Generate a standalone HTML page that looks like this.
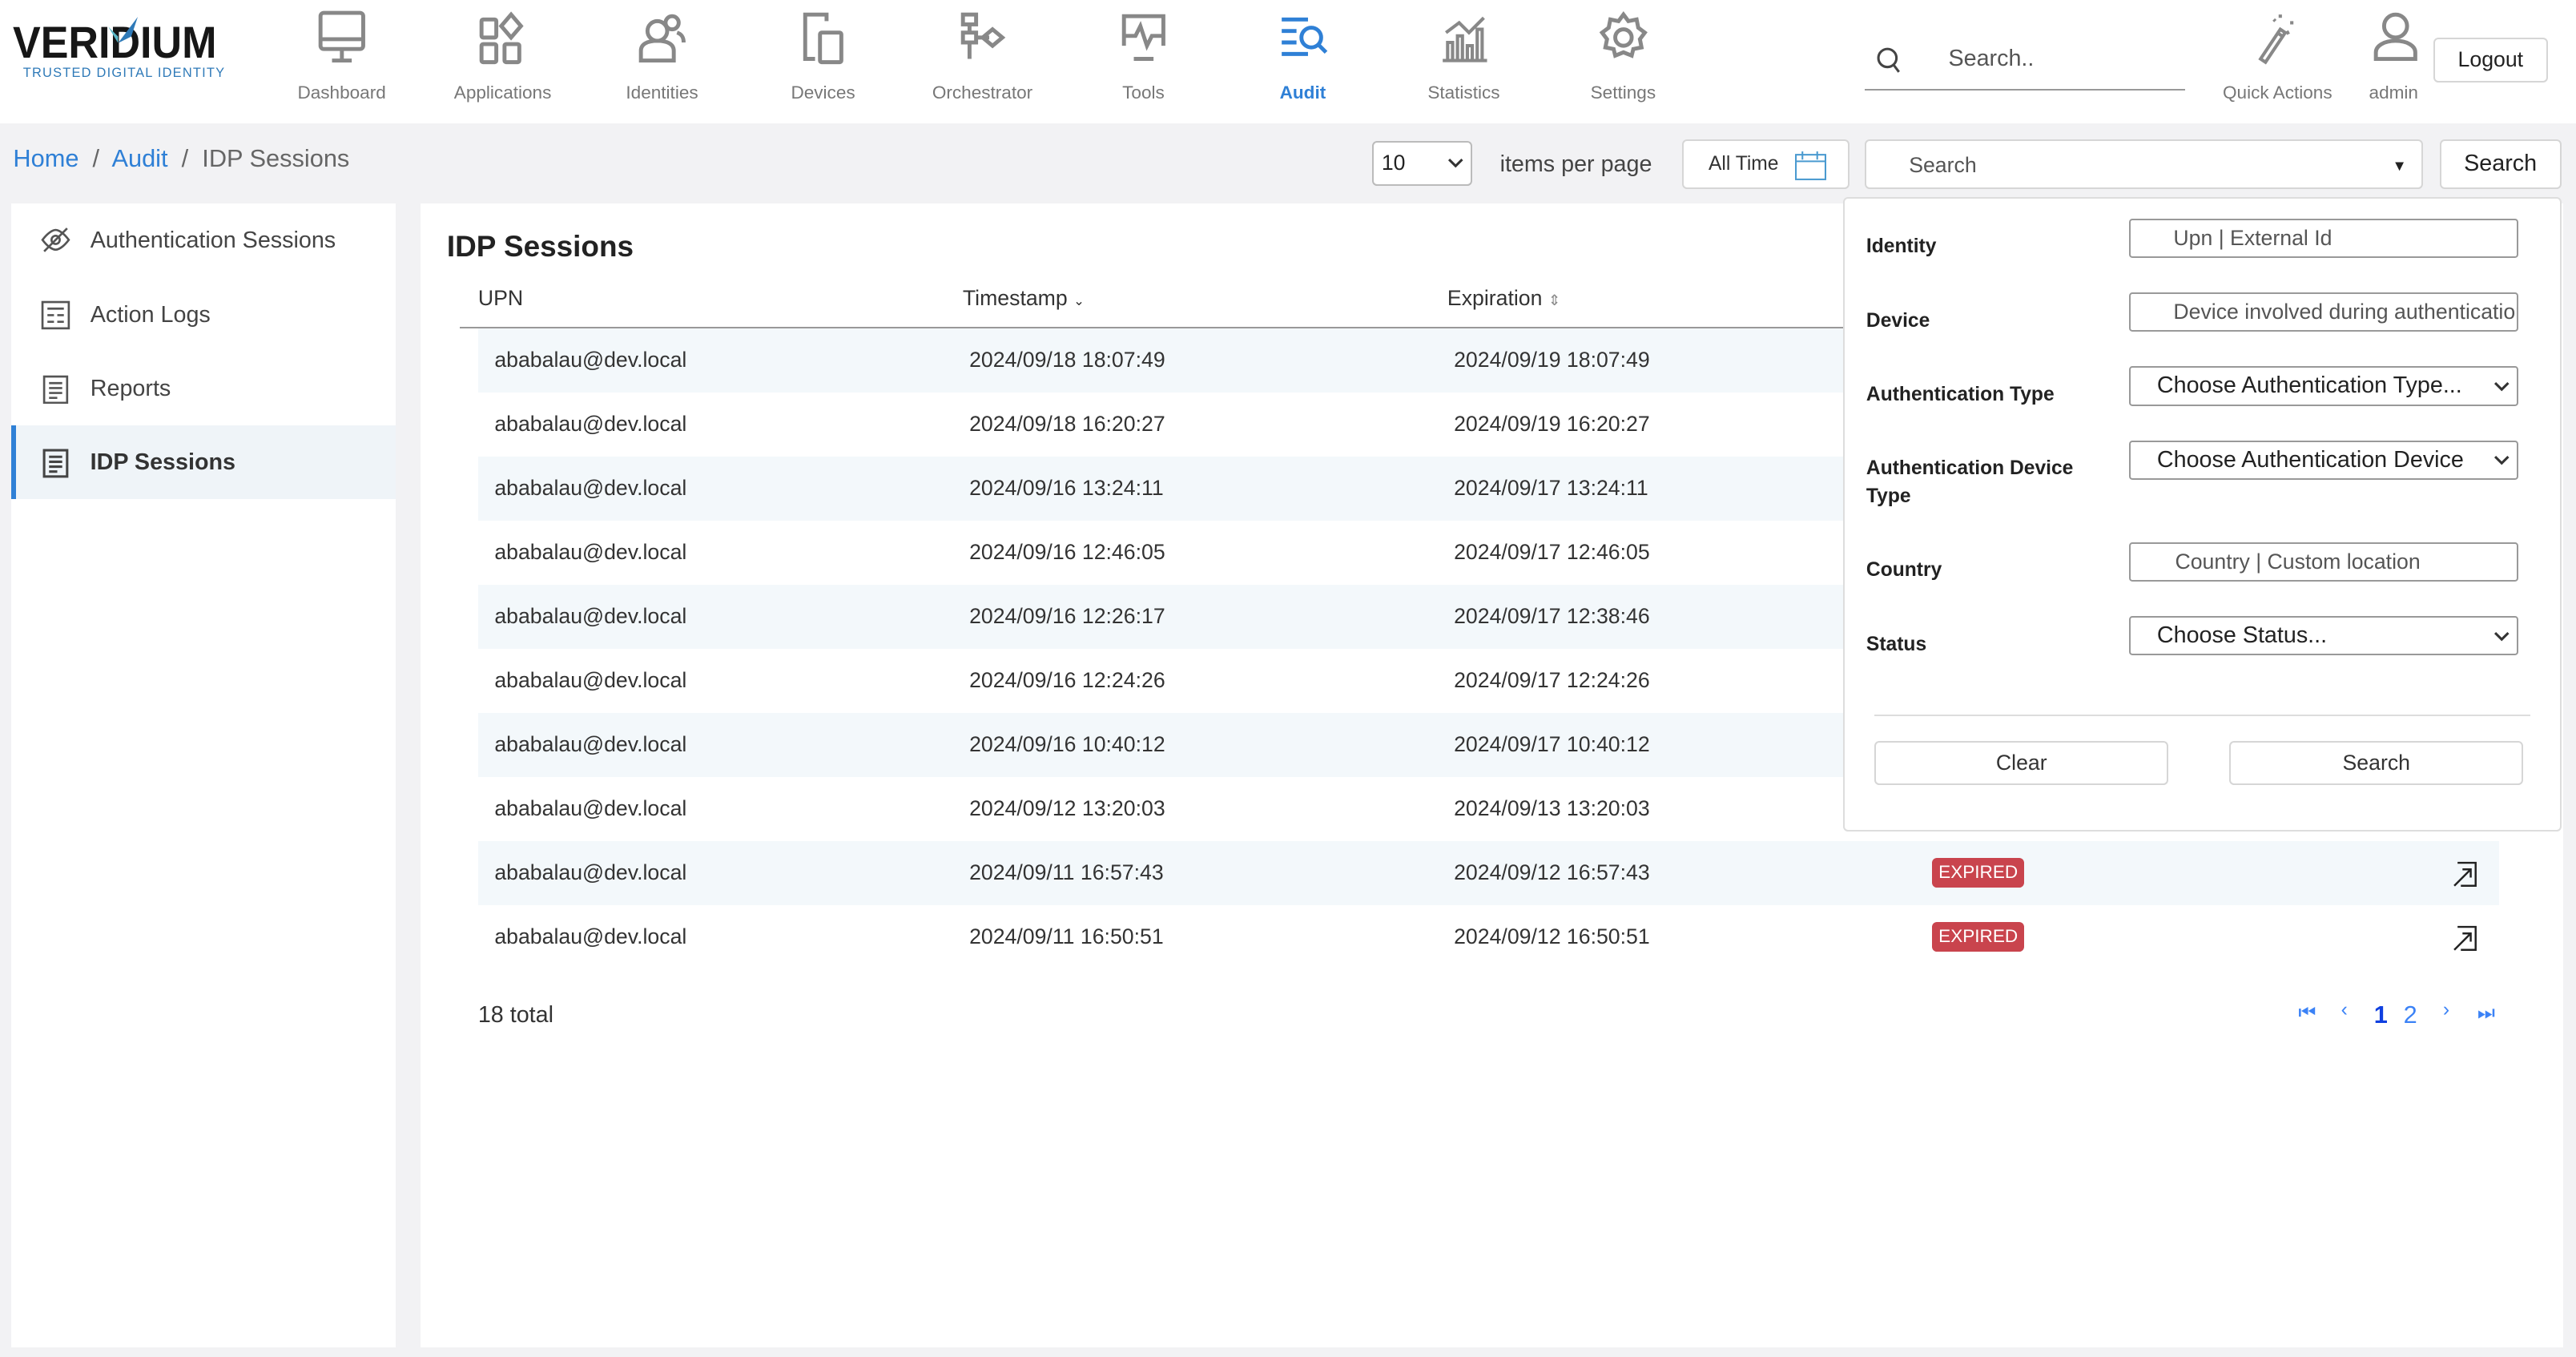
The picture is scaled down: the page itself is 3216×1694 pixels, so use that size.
<!DOCTYPE html>
<html><head><meta charset="utf-8"><style>
*{box-sizing:border-box;margin:0;padding:0}
html,body{width:3216px;height:1694px;overflow:hidden;background:#f2f2f4}
#r{zoom:2.051;width:1568px;height:826px;position:relative;font-family:"Liberation Sans",sans-serif;color:#333}
.a{position:absolute}
.hdr{left:0;top:0;width:1568px;height:75px;background:#fff}
.nav{width:90px;text-align:center;top:6px;color:#777;font-size:11px}
.nav svg{display:block;margin:0 auto 10px;width:32px;height:34px}
.nav.on{color:#2f80d6;font-weight:bold}
.box{background:#fff;border:1px solid #d6d6d6;border-radius:3px}
.side div{height:45px;line-height:45px;padding-left:48px;font-size:14px;color:#444;position:relative}
.side svg{position:absolute;left:18px;top:14px}
.row{left:291px;width:1230px;height:39px;font-size:13px;color:#333;line-height:39px}
.row span{position:absolute}
.lab{left:1136px;font-size:12px;font-weight:bold;color:#222;width:150px;line-height:17px}
.inp{left:1296px;width:237px;height:24px;border:1px solid #999;border-radius:2px;font-size:13px;color:#555;line-height:22px;background:#fff}
.badge{background:#c9444d;color:#fff;font-size:11px;border-radius:3px;padding:0 4px;height:18px;line-height:18px;top:10px}
</style></head><body><div id="r">
<div class="a hdr"></div>
<div class="a" style="left:8px;top:12px">
<div style="font-size:27px;font-weight:bold;color:#161616;line-height:28px;transform:scaleX(0.94);transform-origin:left">VERIDIUM</div>
<div style="font-size:8px;color:#2f7ab8;letter-spacing:0.6px;margin-left:6px">TRUSTED DIGITAL IDENTITY</div>
<svg class="a" style="left:56px;top:-2px" width="22" height="16"><path d="M2 6 L8 12 L8 16 Z" fill="#5bb8c8"/><path d="M8 16 L20 0 L16 12 Z" fill="#2f7ab8"/></svg>
</div>
<div class="a nav" style="left:163px"><svg viewBox="0 0 32 34" fill="none" stroke="#888" stroke-width="2.4"><rect x="3" y="2" width="26" height="22" rx="2"/><path d="M3 18h26M16 24v6M10 31h12"/></svg>Dashboard</div>
<div class="a nav" style="left:261px"><svg viewBox="0 0 32 34" fill="none" stroke="#888" stroke-width="2.4"><rect x="3" y="6" width="9" height="11" rx="1"/><path d="M21 3l6 7-6 7-6-7z"/><rect x="3" y="21" width="9" height="11" rx="1"/><rect x="17" y="21" width="9" height="11" rx="1"/></svg>Applications</div>
<div class="a nav" style="left:358px"><svg viewBox="0 0 32 34" fill="none" stroke="#888" stroke-width="2.4"><circle cx="13" cy="13" r="6"/><circle cx="22" cy="8" r="4"/><path d="M3 31v-6c0-4 4-6 10-6s10 2 10 6v6z"/><path d="M25 14c3 1 4 3 4 6"/></svg>Identities</div>
<div class="a nav" style="left:456px"><svg viewBox="0 0 32 34" fill="none" stroke="#888" stroke-width="2.4"><path d="M18 7V3H5v27h6"/><rect x="14" y="14" width="13" height="18" rx="1"/></svg>Devices</div>
<div class="a nav" style="left:553px"><svg viewBox="0 0 32 34" fill="none" stroke="#888" stroke-width="2.4"><rect x="4" y="3" width="8" height="6"/><rect x="4" y="14" width="8" height="6"/><path d="M8 9v5M8 20v10M12 17h8M22 12l6 5-6 5-6-5z"/></svg>Orchestrator</div>
<div class="a nav" style="left:651px"><svg viewBox="0 0 32 34" fill="none" stroke="#888" stroke-width="2.4"><path d="M4 22V4h24v18M4 16h7l3-6 4 12 3-6h7M10 30h12"/></svg>Tools</div>
<div class="a nav on" style="left:748px"><svg viewBox="0 0 32 34" fill="none" stroke="#2f80d6" stroke-width="2.4"><path d="M3 6h16M3 13h9M3 20h9M3 27h16"/><circle cx="21" cy="17" r="6"/><path d="M25 21l5 5"/></svg>Audit</div>
<div class="a nav" style="left:846px"><svg viewBox="0 0 32 34" fill="none" stroke="#888" stroke-width="2"><path d="M3 31h27M6 31V20h3v11M12 31V16h3v15M18 31V22h3v9M24 31V12h3v19M5 14l8-6 6 6 9-9"/></svg>Statistics</div>
<div class="a nav" style="left:943px"><svg viewBox="0 0 32 34" fill="none" stroke="#888" stroke-width="2.4"><circle cx="16" cy="17" r="5"/><path d="M16 3l3 4 5-1 1 5 4 3-3 4 1 5-5 1-1 4-5-2-5 2-1-4-5-1 1-5-3-4 4-3 1-5 5 1z"/></svg>Settings</div>
<svg class="a" style="left:1142px;top:28px" width="16" height="18" fill="none" stroke="#444" stroke-width="1.5"><circle cx="7" cy="7.5" r="5.5"/><path d="M11 12l3 4"/></svg>
<div class="a" style="left:1186px;top:28px;font-size:14px;color:#555">Search..</div>
<div class="a" style="left:1135px;top:54px;width:195px;height:1px;background:#999"></div>
<svg class="a" style="left:1372px;top:6px" width="32" height="34" fill="none" stroke="#888" stroke-width="2"><path d="M4 30l3 2 12-18-3-2z"/><path d="M14 14l3 2M16 3v2M22 8h2M20 13l1 2M12 6l1 1"/></svg>
<div class="a" style="left:1353px;top:50px;font-size:11px;color:#777">Quick Actions</div>
<svg class="a" style="left:1443px;top:6px" width="30" height="34" fill="none" stroke="#888" stroke-width="2.4"><circle cx="15" cy="10" r="7"/><path d="M3 30v-4c0-4 5-7 12-7s12 3 12 7v4z"/></svg>
<div class="a" style="left:1442px;top:50px;font-size:11px;color:#777">admin</div>
<div class="a box" style="left:1481px;top:23px;width:70px;height:27px;font-size:13px;line-height:25px;text-align:center;color:#222">Logout</div>

<div class="a" style="left:8px;top:88px;font-size:15px;color:#666"><span style="color:#2f80d6">Home</span> &nbsp;/&nbsp; <span style="color:#2f80d6">Audit</span> &nbsp;/&nbsp; IDP Sessions</div>
<div class="a box" style="left:835px;top:86px;width:61px;height:27px;font-size:13px;line-height:25px;padding-left:5px;color:#222;border-color:#bbb">10<svg class="a" style="right:4px;top:9px" width="10" height="7" fill="none" stroke="#333" stroke-width="1.5"><path d="M1 1l4 4 4-4"/></svg></div>
<div class="a" style="left:913px;top:92px;font-size:14px;color:#444">items per page</div>
<div class="a box" style="left:1024px;top:85px;width:102px;height:30px;font-size:12px;line-height:28px;padding-left:15px;color:#333">All Time<svg class="a" style="left:67px;top:5px" width="20" height="19" fill="none" stroke="#4a9ad0" stroke-width="1"><rect x="1" y="3" width="18" height="15"/><path d="M1 7h18M5 1v5M14 1v5"/></svg></div>
<div class="a box" style="left:1135px;top:85px;width:340px;height:30px;font-size:13px;line-height:30px;padding-left:26px;color:#555">Search<span class="a" style="right:9px;top:0;font-size:9px;color:#222">▼</span></div>
<div class="a box" style="left:1485px;top:85px;width:74px;height:30px;font-size:14px;line-height:28px;text-align:center;color:#222">Search</div>

<div class="a side" style="left:7px;top:124px;width:234px;height:696px;background:#fff">
<div><svg width="18" height="16" fill="none" stroke="#555" stroke-width="1.3"><path d="M1 8c3-4 6-6 8-6s5 2 8 6c-3 4-6 6-8 6s-5-2-8-6z"/><circle cx="9" cy="8" r="2.5"/><path d="M2 15L16 1"/></svg>Authentication Sessions</div>
<div><svg width="18" height="18" fill="none" stroke="#555" stroke-width="1.3"><rect x="1" y="1" width="16" height="16"/><path d="M4 5h10M4 9h4M10 9h4M4 13h4M10 13h4"/></svg>Action Logs</div>
<div><svg width="18" height="18" fill="none" stroke="#555" stroke-width="1.3"><rect x="2" y="1" width="14" height="16"/><path d="M5 5h8M5 8h8M5 11h8M5 14h5"/></svg>Reports</div>
<div style="background:#eff4f8;border-left:3px solid #2f80d6;font-weight:bold;color:#333;padding-left:45px"><svg width="18" height="18" fill="none" stroke="#444" stroke-width="1.5" style="left:15px"><rect x="2" y="1" width="14" height="16"/><path d="M5 5h8M5 8h8M5 11h8M5 14h5"/></svg>IDP Sessions</div>
</div>

<div class="a" style="left:256px;top:124px;width:1304px;height:696px;background:#fff"></div>
<div class="a" style="left:272px;top:140px;font-size:18px;font-weight:bold;color:#222">IDP Sessions</div>
<div class="a" style="left:291px;top:174px;font-size:13px;color:#333">UPN</div>
<div class="a" style="left:586px;top:174px;font-size:13px;color:#333">Timestamp <span style="font-size:8px">⌄</span></div>
<div class="a" style="left:881px;top:174px;font-size:13px;color:#333">Expiration <span style="font-size:9px;color:#888">⇕</span></div>
<div class="a" style="left:280px;top:199px;width:1241px;height:1px;background:#999"></div>

<div class="a row" style="top:200px;background:#f3f8fb"><span style="left:10px">ababalau@dev.local</span><span style="left:299px">2024/09/18 18:07:49</span><span style="left:594px">2024/09/19 18:07:49</span></div>
<div class="a row" style="top:239px"><span style="left:10px">ababalau@dev.local</span><span style="left:299px">2024/09/18 16:20:27</span><span style="left:594px">2024/09/19 16:20:27</span></div>
<div class="a row" style="top:278px;background:#f3f8fb"><span style="left:10px">ababalau@dev.local</span><span style="left:299px">2024/09/16 13:24:11</span><span style="left:594px">2024/09/17 13:24:11</span></div>
<div class="a row" style="top:317px"><span style="left:10px">ababalau@dev.local</span><span style="left:299px">2024/09/16 12:46:05</span><span style="left:594px">2024/09/17 12:46:05</span></div>
<div class="a row" style="top:356px;background:#f3f8fb"><span style="left:10px">ababalau@dev.local</span><span style="left:299px">2024/09/16 12:26:17</span><span style="left:594px">2024/09/17 12:38:46</span></div>
<div class="a row" style="top:395px"><span style="left:10px">ababalau@dev.local</span><span style="left:299px">2024/09/16 12:24:26</span><span style="left:594px">2024/09/17 12:24:26</span></div>
<div class="a row" style="top:434px;background:#f3f8fb"><span style="left:10px">ababalau@dev.local</span><span style="left:299px">2024/09/16 10:40:12</span><span style="left:594px">2024/09/17 10:40:12</span></div>
<div class="a row" style="top:473px"><span style="left:10px">ababalau@dev.local</span><span style="left:299px">2024/09/12 13:20:03</span><span style="left:594px">2024/09/13 13:20:03</span></div>
<div class="a row" style="top:512px;background:#f3f8fb"><span style="left:10px">ababalau@dev.local</span><span style="left:299px">2024/09/11 16:57:43</span><span style="left:594px">2024/09/12 16:57:43</span><span class="badge" style="left:885px">EXPIRED</span><svg class="a" style="left:1202px;top:12px" width="16" height="16" fill="none" stroke="#222" stroke-width="1.2"><path d="M3 1h11v14H5M1 15l10-10M6 5h5v5"/></svg></div>
<div class="a row" style="top:551px"><span style="left:10px">ababalau@dev.local</span><span style="left:299px">2024/09/11 16:50:51</span><span style="left:594px">2024/09/12 16:50:51</span><span class="badge" style="left:885px">EXPIRED</span><svg class="a" style="left:1202px;top:12px" width="16" height="16" fill="none" stroke="#222" stroke-width="1.2"><path d="M3 1h11v14H5M1 15l10-10M6 5h5v5"/></svg></div>

<div class="a" style="left:291px;top:610px;font-size:14px;color:#333">18 total</div>
<div class="a" style="left:1399px;top:608px;font-size:12px;color:#3b82f6;width:125px;height:20px">
<span class="a" style="left:0;top:2px">⏮</span><span class="a" style="left:26px;top:0">‹</span><span class="a" style="left:46px;top:1px;font-size:15px;font-weight:bold;color:#1040e0">1</span><span class="a" style="left:64px;top:1px;font-size:15px">2</span><span class="a" style="left:88px;top:0">›</span><span class="a" style="left:109px;top:2px">⏭</span></div>

<div class="a" style="left:1122px;top:120px;width:437px;height:386px;background:#fff;border:1px solid #ddd;border-radius:3px"></div>
<div class="a lab" style="top:142px">Identity</div>
<div class="a lab" style="top:187px">Device</div>
<div class="a lab" style="top:232px">Authentication Type</div>
<div class="a lab" style="top:277px">Authentication Device Type</div>
<div class="a lab" style="top:339px">Country</div>
<div class="a lab" style="top:384px">Status</div>
<div class="a inp" style="top:133px;padding-left:26px">Upn | External Id</div>
<div class="a inp" style="top:178px;padding-left:26px;overflow:hidden;white-space:nowrap">Device involved during authentication</div>
<div class="a inp" style="top:223px;padding-left:16px;color:#222;font-size:14px">Choose Authentication Type...<svg class="a" style="right:4px;top:8px" width="10" height="7" fill="none" stroke="#333" stroke-width="1.5"><path d="M1 1l4 4 4-4"/></svg></div>
<div class="a inp" style="top:268px;padding-left:16px;color:#222;font-size:14px">Choose Authentication Device<svg class="a" style="right:4px;top:8px" width="10" height="7" fill="none" stroke="#333" stroke-width="1.5"><path d="M1 1l4 4 4-4"/></svg></div>
<div class="a inp" style="top:330px;padding-left:27px">Country | Custom location</div>
<div class="a inp" style="top:375px;padding-left:16px;color:#222;font-size:14px">Choose Status...<svg class="a" style="right:4px;top:8px" width="10" height="7" fill="none" stroke="#333" stroke-width="1.5"><path d="M1 1l4 4 4-4"/></svg></div>
<div class="a" style="left:1141px;top:435px;width:399px;height:1px;background:#ddd"></div>
<div class="a box" style="left:1141px;top:451px;width:179px;height:27px;font-size:13px;line-height:25px;text-align:center;color:#333">Clear</div>
<div class="a box" style="left:1357px;top:451px;width:179px;height:27px;font-size:13px;line-height:25px;text-align:center;color:#333">Search</div>
</div></body></html>
